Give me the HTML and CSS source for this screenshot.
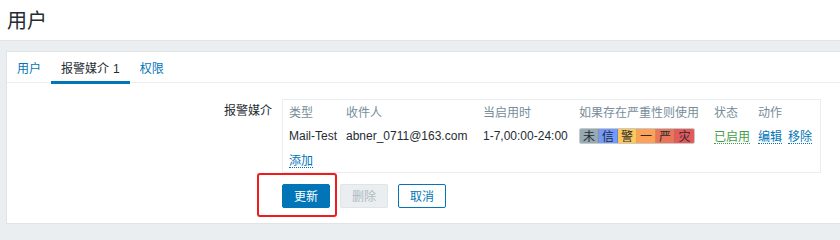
FILE: index.html
```html
<!DOCTYPE html>
<html lang="zh-CN">
<head>
<meta charset="utf-8">
<title>用户</title>
<link rel="stylesheet" href="styles.css">
</head>
<body>
<header class="page-header">
  <h1 class="page-title">用户</h1>
</header>
<main class="page-body">
  <section class="panel">
    <nav class="tabs">
      <a class="tab">用户</a>
      <a class="tab tab-active">报警媒介<span class="tab-count">1</span></a>
      <a class="tab">权限</a>
    </nav>
    <div class="form">
      <div class="form-row">
        <div class="form-label">报警媒介</div>
        <div class="media-box">
          <div class="media-grid">
            <div class="th">类型</div>
            <div class="th">收件人</div>
            <div class="th">当启用时</div>
            <div class="th">如果存在严重性则使用</div>
            <div class="th">状态</div>
            <div class="th">动作</div>

            <div class="td">Mail-Test</div>
            <div class="td">abner_0711@163.com</div>
            <div class="td">1-7,00:00-24:00</div>
            <div class="td">
              <div class="sev">
                <span class="sev-item sev-nc">未</span><span class="sev-item sev-info">信</span><span class="sev-item sev-warn">警</span><span class="sev-item sev-avg">一</span><span class="sev-item sev-high">严</span><span class="sev-item sev-dis">灾</span>
              </div>
            </div>
            <div class="td"><a class="link link-green">已启用</a></div>
            <div class="td actions"><a class="link">编辑</a><a class="link">移除</a></div>

            <div class="td add"><a class="link">添加</a></div>
          </div>
        </div>
      </div>
      <div class="buttons">
        <button class="btn btn-primary">更新</button>
        <button class="btn btn-disabled" disabled>删除</button>
        <button class="btn btn-alt">取消</button>
        <span class="highlight"></span>
      </div>
    </div>
  </section>
</main>
</body>
</html>
```

FILE: styles.css
```css
* { box-sizing: border-box; }

html, body {
  margin: 0;
  padding: 0;
}

body {
  background: #ebeef0;
  font-family: "Liberation Sans", "Noto Sans CJK SC", sans-serif;
  font-size: 12px;
  color: #1f2c33;
  overflow: hidden;
  width: 840px;
  height: 240px;
}

.page-header {
  background: #ffffff;
  height: 41px;
  border-bottom: 1px solid #dfe4e7;
  display: flex;
  align-items: center;
  padding-left: 7px;
}

.page-title {
  margin: 0;
  font-size: 20px;
  font-weight: normal;
  color: #1f2c33;
  line-height: 24px;
  font-family: "Noto Sans CJK SC", sans-serif;
}

.page-body {
  padding: 10px 0 0 6px;
}

.panel {
  background: #ffffff;
  border: 1px solid #dfe4e7;
  border-right: none;
  height: 173px;
}

.tabs {
  display: flex;
  height: 31px;
  border-bottom: 1px solid #ebeef0;
}

.tab {
  display: block;
  padding: 3px 10px 0;
  height: 32px;
  line-height: 26px;
  color: #0275b8;
  font-family: "Noto Sans CJK SC", sans-serif;
  cursor: pointer;
  border-bottom: 3px solid transparent;
  white-space: nowrap;
}

.tab-active {
  color: #1f2c33;
  border-bottom-color: #0275b8;
}

.tab-count {
  font-family: "Liberation Sans", sans-serif;
  margin-left: 4px;
}

.form {
  padding-top: 16px;
  position: relative;
}

.form-row {
  display: flex;
  gap: 10px;
}

.form-label {
  width: 265px;
  text-align: right;
  line-height: 22px;
  color: #1f2c33;
  font-family: "Noto Sans CJK SC", sans-serif;
}

.media-box {
  width: 539px;
  height: 74px;
  border: 1px solid #ebeef0;
  padding-left: 6px;
}

.media-grid {
  display: grid;
  grid-template-columns: 57px 137px 96px 135px 44px auto;
  grid-auto-rows: 24px;
}

.th, .td {
  display: flex;
  align-items: center;
  white-space: nowrap;
}

.th {
  color: #768d99;
  font-family: "Noto Sans CJK SC", sans-serif;
  padding-bottom: 1px;
}

.td {
  color: #1f2c33;
}

.add {
  grid-column: 1 / span 2;
}

.link {
  color: #0275b8;
  border-bottom: 1px dotted #0275b8;
  line-height: 15px;
  cursor: pointer;
  font-family: "Noto Sans CJK SC", sans-serif;
}

.link-green {
  color: #429e47;
  border-bottom-color: #429e47;
}

.actions {
  gap: 6px;
}

.sev {
  display: flex;
  border-radius: 2px;
  overflow: hidden;
  border: 1px solid rgba(31, 44, 51, 0.25);
}

.sev-item {
  width: 19px;
  height: 14px;
  display: flex;
  align-items: center;
  justify-content: center;
  font-family: "Noto Sans CJK SC", sans-serif;
  font-size: 12px;
  line-height: 14px;
  color: #1f2c33;
  border-right: 1px solid rgba(31, 44, 51, 0.18);
}

.sev-item:last-child { border-right: none; }

.sev-nc { background: #97aab3; }
.sev-info { background: #7499ff; }
.sev-warn { background: #ffc859; }
.sev-avg { background: #ffa059; }
.sev-high { background: #e97659; }
.sev-dis { background: #e45959; }

.buttons {
  display: flex;
  gap: 10px;
  padding-left: 275px;
  margin-top: 11px;
  position: relative;
}

.btn {
  height: 24px;
  width: 48px;
  padding: 0;
  border-radius: 2px;
  font-family: "Noto Sans CJK SC", sans-serif;
  font-size: 12px;
  line-height: 22px;
  cursor: pointer;
}

.btn-primary {
  background: #0275b8;
  border: 1px solid #0275b8;
  color: #ffffff;
}

.btn-disabled {
  background: #ebeef0;
  border: 1px solid #dfe4e7;
  color: #acbbc2;
  cursor: default;
}

.btn-alt {
  background: #ffffff;
  border: 1px solid #0275b8;
  color: #0275b8;
}

.highlight {
  position: absolute;
  left: 250px;
  top: -11px;
  width: 80px;
  height: 44px;
  border: 2px solid #f21b1b;
  border-radius: 3px;
  pointer-events: none;
}
```
